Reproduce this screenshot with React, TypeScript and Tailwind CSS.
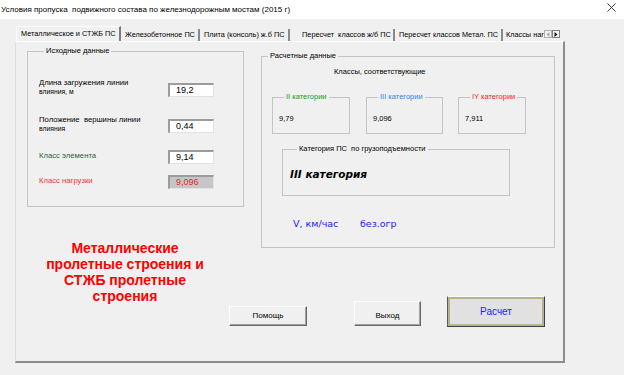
import React from "react";

const Field = ({ value, gray }: { value: string; gray?: boolean }) => (
  <div
    className={`w-[46px] h-[14px] border-t-2 border-l-2 border-t-[#9c9c9c] border-l-[#9c9c9c] border-b border-r border-b-[#e3e3e3] border-r-[#e3e3e3] pl-[6px] text-[9px] leading-[11px] ${
      gray ? "bg-[#c6c6c6] text-[#e02a2a]" : "bg-white text-[#000]"
    }`}
  >
    {value}
  </div>
);

const Legend = ({ children, className = "" }: { children: React.ReactNode; className?: string }) => (
  <legend className={`px-[2px] text-[7.5px] leading-[10px] ${className}`}>{children}</legend>
);

const Tab = ({ label, w, active }: { label: string; w: string; active?: boolean }) => (
  <div
    className={`${w} shrink-0 overflow-hidden whitespace-nowrap text-[7.3px] text-[#000] ${
      active
        ? "h-[15px] border-l border-t border-l-white border-t-white border-r-2 border-r-[#7c7c7c] pl-[4px] leading-[13px] bg-[#f0f0f0] relative z-10 -mb-px"
        : "h-[12px] mt-[3px] border-r-2 border-r-[#8a8a8a] pl-[4px] leading-[11px]"
    }`}
  >
    {label}
  </div>
);

const SubBox = ({ label, color, value, w }: { label: string; color: string; value: string; w: string }) => (
  <fieldset className={`${w} h-[42px] border border-[#c4c4c4] pl-[6px]`}>
    <Legend className={`ml-[5px] ${color}`}>{label}</Legend>
    <div className="pt-[12px] text-[7.5px] leading-[10px] text-[#000]">{value}</div>
  </fieldset>
);

export default function App() {
  return (
    <div className="w-[624px] h-[375px] bg-[#f0f0f0] overflow-hidden font-['Liberation_Sans',Arial,sans-serif] text-[#000]">
      {/* title bar */}
      <div className="h-[19px] bg-white flex items-center justify-between pl-[1px] pr-[8px]">
        <span className="mt-px text-[8px] leading-[10px] text-[#000]">
          Условия пропуска&nbsp; подвижного состава по железнодорожным мостам (2015 г)
        </span>
        <svg width="9" height="9" viewBox="0 0 9 9" className="-mt-[4px]">
          <path d="M0.5 0.5 L8.5 8.5 M8.5 0.5 L0.5 8.5" stroke="#222" strokeWidth="0.9" />
        </svg>
      </div>

      {/* tabs */}
      <div className="ml-[15px] mt-[7px] w-[550px]">
        <div className="flex h-[15px] pl-[1px]">
          <Tab label="Металлическое и СТЖБ ПС" w="w-[105px]" active />
          <Tab label="Железобетонное ПС" w="w-[79px]" />
          <Tab label="Плита (консоль) ж.б ПС" w="w-[90px]" />
          <Tab label="    Пересчет  классов ж/б ПС" w="w-[105px] whitespace-pre" />
          <Tab label="Пересчет классов Метал. ПС" w="w-[108px]" />
          <div className="w-[41px] h-[12px] mt-[3px] overflow-hidden whitespace-nowrap text-[7.3px] leading-[11px] pl-[3px]">
            Классы нагрузки
          </div>
          <div className="flex mt-[4px] h-[8px]">
            <div className="w-[8px] h-[8px] border border-[#b0b0b0] bg-[#f4f4f4] flex items-center justify-center">
              <svg width="4" height="5" viewBox="0 0 4 5">
                <path d="M3.5 0 L0.5 2.5 L3.5 5 Z" fill="#a8a8a8" />
              </svg>
            </div>
            <div className="w-[8px] h-[8px] border border-[#808080] bg-[#f4f4f4] flex items-center justify-center">
              <svg width="4" height="5" viewBox="0 0 4 5">
                <path d="M0.5 0 L3.5 2.5 L0.5 5 Z" fill="#111" />
              </svg>
            </div>
          </div>
        </div>

        {/* panel */}
        <div className="w-[550px] h-[322px] border-l border-t border-l-[#dedede] border-t-white border-r-2 border-b-2 border-r-[#8c8c8c] border-b-[#8c8c8c] flex">
          {/* left column */}
          <div className="ml-[11px] w-[217px] flex flex-col">
            <fieldset className="mt-[4px] h-[161px] border border-[#c4c4c4] pl-[11px]">
              <Legend className="ml-[5px] text-[#000]">Исходные данные</Legend>
              <div className="pt-[22px] flex flex-col">
                <div className="h-[37px] flex items-start">
                  <div className="w-[129px] text-[#000]">
                    <div className="text-[7.7px] leading-[9px]">Длина загружения линии</div>
                    <div className="text-[6.8px] leading-[9px]">влияния, м</div>
                  </div>
                  <div className="mt-[5px]">
                    <Field value="19,2" />
                  </div>
                </div>
                <div className="h-[35px] flex items-start">
                  <div className="w-[129px] text-[#000]">
                    <div className="text-[7.7px] leading-[9px]">Положение&nbsp; вершины линии</div>
                    <div className="text-[6.8px] leading-[9px]">влияния</div>
                  </div>
                  <div className="mt-[4px]">
                    <Field value="0,44" />
                  </div>
                </div>
                <div className="h-[25px] flex items-start">
                  <div className="w-[129px] mt-px text-[7.7px] leading-[9px] text-[#2a6336]">Класс элемента</div>
                  <Field value="9,14" />
                </div>
                <div className="flex items-start">
                  <div className="w-[129px] mt-px text-[7.7px] leading-[9px] text-[#f03030]">Класс нагрузки</div>
                  <Field value="9,096" gray />
                </div>
              </div>
            </fieldset>

            <div className="mt-[33px] pr-[21px] text-center text-[14px] leading-[16px] font-bold text-[#ff0000]">
              Металлические
              <br />
              пролетные строения и
              <br />
              СТЖБ пролетные
              <br />
              строения
            </div>
          </div>

          {/* right column */}
          <div className="ml-[17px] flex flex-col">
            <fieldset className="mt-[9px] w-[294px] h-[197px] border border-[#c4c4c4]">
              <Legend className="ml-[6px] text-[#000]">Расчетные данные</Legend>
              <div className="pt-[6px] pl-[72px] text-[7.5px] leading-[10px] text-[#000]">
                Классы, соответствующие
              </div>
              <div className="mt-[15px] pl-[10px] flex">
                <SubBox label="II категории" color="text-[#149a22]" value="9,79" w="w-[78px]" />
                <div className="ml-[16px]">
                  <SubBox label="III категории" color="text-[#2f86e0]" value="9,096" w="w-[77px]" />
                </div>
                <div className="ml-[15px]">
                  <SubBox label="IY категории" color="text-[#f52222]" value="7,911" w="w-[68px]" />
                </div>
              </div>
              <fieldset className="mt-[10px] ml-[20px] w-[228px] h-[52px] border border-[#c4c4c4] pl-[7px]">
                <Legend className="ml-[7px] text-[#000]">Категория ПС&nbsp; по грузоподъемности</Legend>
                <div className="pt-[13px] font-['DejaVu_Sans',Verdana,sans-serif] font-bold italic text-[10.5px] leading-[14px] text-[#000]">
                  III категория
                </div>
              </fieldset>
              <div className="mt-[22px] pl-[31px] flex font-['DejaVu_Sans',Verdana,sans-serif] text-[9.5px] leading-[12px] text-[#2222ff]">
                <span className="w-[67px]">V, км/час</span>
                <span>без.огр</span>
              </div>
            </fieldset>

            <div className="mt-[48px] -ml-[32px] flex items-end">
              <button className="mb-px w-[78px] h-[20px] bg-[#f0f0f0] border border-t-white border-l-white border-b-[#6a6a6a] border-r-[#6a6a6a] shadow-[inset_-1px_-1px_0_#a0a0a0] text-[8px] leading-[18px] text-[#000]">
                Помощь
              </button>
              <button className="ml-[47px] mb-px w-[67px] h-[25px] bg-[#f0f0f0] border border-t-white border-l-white border-b-[#6a6a6a] border-r-[#6a6a6a] shadow-[inset_-1px_-1px_0_#a0a0a0] text-[8px] leading-[23px] pt-[2px] text-[#000]">
                Выход
              </button>
              <button className="ml-[26px] w-[98px] h-[31px] bg-[#e1e1e1] border border-t-white border-l-[#5a5a5a] border-b-[#404040] border-r-[#404040] shadow-[inset_0_0_0_2px_#b6b48c] text-[10px] leading-[29px] text-[#2020ff]">
                Расчет
              </button>
            </div>
          </div>
        </div>
      </div>
    </div>
  );
}
